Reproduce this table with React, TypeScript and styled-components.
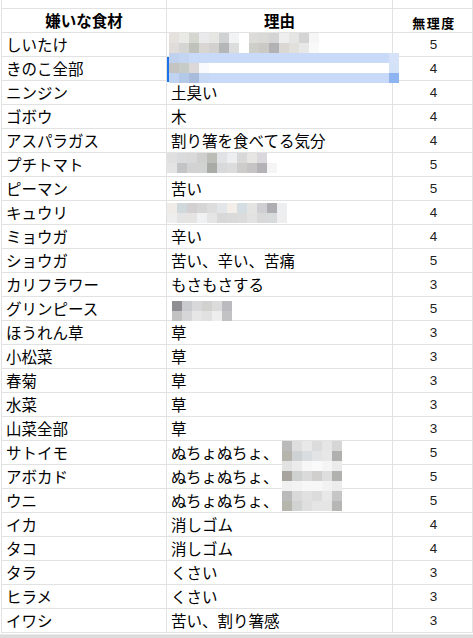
import { Fragment } from "react";
import styled, { createGlobalStyle } from "styled-components";

type Mosaic = { x: number; y: number; tiles: string[][] };

type Row = {
  name: string;
  reason?: string;
  score: number;
  mosaic?: Mosaic;
  selected?: boolean;
};

const shiitake: Mosaic = {
  x: 2,
  y: 0,
  tiles: [
    ["#e5e2de", "#e9e9e6", "#d6d6d1", "#eaeaec", "#e6e6e2", "#cfd2d3", "#f1f3f4", "#fff", "#dcdbd8", "#d9d9d6", "#d4d4d4", "#eeeeee", "#e5e5e3", "#d4d4d4", "#f6f6f6"],
    ["#e0dcd9", "#d5d5d3", "#bfc2bb", "#d8d5d3", "#d2d1cf", "#b4b6b7", "#dcdddd", "#fff", "#cfcfca", "#cac9c6", "#b2b2b5", "#dad7d5", "#e2e0dd", "#e8e8e8", "#f9f9f9"],
  ],
};

const band = (n: number, c: string) => Array.from({ length: n }, () => c);

// selected cell, pixelated together with its contents
const kinoko: Mosaic = {
  x: 2,
  y: -4,
  tiles: [
    ["#bfd1ee", "#c3d5f0", ...band(20, "#c9daf8"), "#d5e2f7"],
    ["#c4c5c3", "#c8ccc8", "#dcd7d9", "#f8fafd", ...band(18, "#fff"), "#d4e2f8"],
    ["#c0d3f0", "#b4c8e8", "#a9bcdc", "#c7d8f4", ...band(18, "#c9daf8"), "#8db4f1"],
  ],
};

const petit: Mosaic = {
  x: 0,
  y: 0,
  tiles: [
    ["#e0e0e0", "#d9dbdc", "#d9d9d9", "#cfd0ce", "#bdbdb8", "#e0e3e5", "#edeef0", "#d8d8d8", "#e8e6e3", "#dad8dc", "#fff"],
    ["#e4e4e4", "#c2c4c6", "#d2d2d2", "#d1d3d3", "#a9aba6", "#d8d9db", "#dcdcdc", "#cecccb", "#c6c4c4", "#b5b2b7", "#f5f5f5"],
  ],
};

const kyuri: Mosaic = {
  x: 0,
  y: 2,
  tiles: [
    ["#efebe6", "#d0d8dc", "#d2d0d0", "#d6d6d6", "#dddddd", "#e3e6e8", "#f3efe8", "#d3dde2", "#e4e4e2", "#cfcfd3", "#aeadb1", "#edeef0"],
    ["#eeeeee", "#e4e4e4", "#e5e4e2", "#eff1f2", "#e5e5e5", "#d8d8d8", "#dadada", "#dcdcdc", "#e2e2e2", "#d9d9d9", "#d8dbdb", "#eeeeee"],
  ],
};

const greenpeas: Mosaic = {
  x: 5,
  y: 4,
  tiles: [
    ["#8f8f93", "#c9cacd", "#d8d8da", "#d1d2d0", "#dbdbdb", "#bbbbbf"],
    ["#c3c2c3", "#d6d6d8", "#e6e6e6", "#e1e1e1", "#eeeeee", "#c2c2c4"],
  ],
};

// spans the three ぬちょぬちょ rows
const nuchoNucho: Mosaic = {
  x: 115,
  y: 0,
  tiles: [
    ["#bababa", "#dedede", "#e8e8e8", "#dcdcdc", "#e6e6e6", "#d6d6d6"],
    ["#b5b5ae", "#cfd2d3", "#dadde0", "#e1e3e5", "#e7e7e7", "#b0b0ae"],
    ["#e2e2e2", "#ebebeb", "#f7f7f7", "#fafafa", "#f5f5f5", "#ebebeb"],
    ["#a7a59d", "#cfd0d0", "#dadada", "#d1cfcd", "#dedede", "#b1b1af"],
    ["#f0f0f0", "#f3f3f3", "#f7f7f7", "#f7f7f7", "#f2f2f2", "#ececec"],
    ["#bababa", "#d9d9d9", "#e0e0e0", "#dcdcdc", "#e8e8e8", "#c6c6c6"],
    ["#b6b6ad", "#d0d3d2", "#dfdfdf", "#e5e5e5", "#e5e5e5", "#b6b6b4"],
  ],
};

const rows: Row[] = [
  { name: "しいたけ", score: 5, mosaic: shiitake },
  { name: "きのこ全部", score: 4, mosaic: kinoko, selected: true },
  { name: "ニンジン", reason: "土臭い", score: 4 },
  { name: "ゴボウ", reason: "木", score: 4 },
  { name: "アスパラガス", reason: "割り箸を食べてる気分", score: 4 },
  { name: "プチトマト", score: 5, mosaic: petit },
  { name: "ピーマン", reason: "苦い", score: 5 },
  { name: "キュウリ", score: 4, mosaic: kyuri },
  { name: "ミョウガ", reason: "辛い", score: 4 },
  { name: "ショウガ", reason: "苦い、辛い、苦痛", score: 5 },
  { name: "カリフラワー", reason: "もさもさする", score: 3 },
  { name: "グリンピース", score: 5, mosaic: greenpeas },
  { name: "ほうれん草", reason: "草", score: 3 },
  { name: "小松菜", reason: "草", score: 3 },
  { name: "春菊", reason: "草", score: 3 },
  { name: "水菜", reason: "草", score: 3 },
  { name: "山菜全部", reason: "草", score: 3 },
  { name: "サトイモ", reason: "ぬちょぬちょ、", score: 5, mosaic: nuchoNucho },
  { name: "アボカド", reason: "ぬちょぬちょ、", score: 5 },
  { name: "ウニ", reason: "ぬちょぬちょ、", score: 5 },
  { name: "イカ", reason: "消しゴム", score: 4 },
  { name: "タコ", reason: "消しゴム", score: 4 },
  { name: "タラ", reason: "くさい", score: 3 },
  { name: "ヒラメ", reason: "くさい", score: 3 },
  { name: "イワシ", reason: "苦い、割り箸感", score: 3 },
];

function MosaicBlock({ m }: { m: Mosaic }) {
  return (
    <MosaicGrid $x={m.x} $y={m.y} $cols={m.tiles[0].length}>
      {m.tiles.flat().map((c, i) => (
        <Tile key={i} $c={c} />
      ))}
    </MosaicGrid>
  );
}

export default function App() {
  return (
    <>
      <GlobalStyle />
      <Sheet>
        <Strip />
        <Strip />
        <Strip />
        <HeadCell>嫌いな食材</HeadCell>
        <HeadCell>理由</HeadCell>
        <HeadCell $small>無理度</HeadCell>
        {rows.map((r) => (
          <Fragment key={r.name}>
            <NameCell>{r.name}</NameCell>
            <ReasonCell>
              {r.reason}
              {r.mosaic && <MosaicBlock m={r.mosaic} />}
              {r.selected && <SelectEdge />}
            </ReasonCell>
            <ScoreCell>{r.score}</ScoreCell>
          </Fragment>
        ))}
      </Sheet>
      <ScrollBar />
    </>
  );
}

const GlobalStyle = createGlobalStyle`
  html, body {
    margin: 0;
    padding: 0;
    background: #fff;
  }
  body {
    width: 473px;
    height: 638px;
    overflow: hidden;
  }
`;

const Sheet = styled.div`
  display: grid;
  grid-template-columns: 165px 226px 1fr;
  margin-left: 1px;
  border-left: 1px solid #e2e2e2;
  font-family: "Noto Sans CJK JP", sans-serif;
  color: #000;
`;

const Cell = styled.div`
  position: relative;
  box-sizing: border-box;
  height: 24px;
  display: flex;
  align-items: center;
  border-right: 1px solid #e2e2e2;
  border-bottom: 1px solid #e2e2e2;
  font-size: 15.5px;
  line-height: 1;
  white-space: nowrap;
`;

const Strip = styled(Cell)`
  height: 9px;
`;

const HeadCell = styled(Cell)<{ $small?: boolean }>`
  justify-content: center;
  font-weight: bold;
  font-size: ${(p) => (p.$small ? "13px" : "15.5px")};
  letter-spacing: ${(p) => (p.$small ? "1.5px" : "0")};
  padding-top: ${(p) => (p.$small ? "3px" : "0")};
  padding-left: ${(p) => (p.$small ? "3px" : "0")};
`;

const NameCell = styled(Cell)`
  padding-left: 4px;
`;

const ReasonCell = styled(Cell)`
  padding-left: 4px;
`;

const ScoreCell = styled(Cell)`
  justify-content: center;
  font-family: "Liberation Sans", Arial, sans-serif;
  font-size: 13.5px;
  color: #222;
  padding-left: 2px;
`;

const MosaicGrid = styled.div<{ $x: number; $y: number; $cols: number }>`
  position: absolute;
  left: ${(p) => p.$x}px;
  top: ${(p) => p.$y}px;
  z-index: 1;
  display: grid;
  grid-template-columns: repeat(${(p) => p.$cols}, 10px);
  grid-auto-rows: 10px;
`;

const Tile = styled.div<{ $c: string }>`
  background: ${(p) => p.$c};
`;

const SelectEdge = styled.div`
  position: absolute;
  left: 0;
  top: 0;
  width: 2px;
  height: 25px;
  background: #1a73e8;
  z-index: 2;
`;

const ScrollBar = styled.div`
  margin-top: 1px;
  height: 5px;
  background: #dcdcdc;
  border-top: 1px solid #e8e8e8;
`;
